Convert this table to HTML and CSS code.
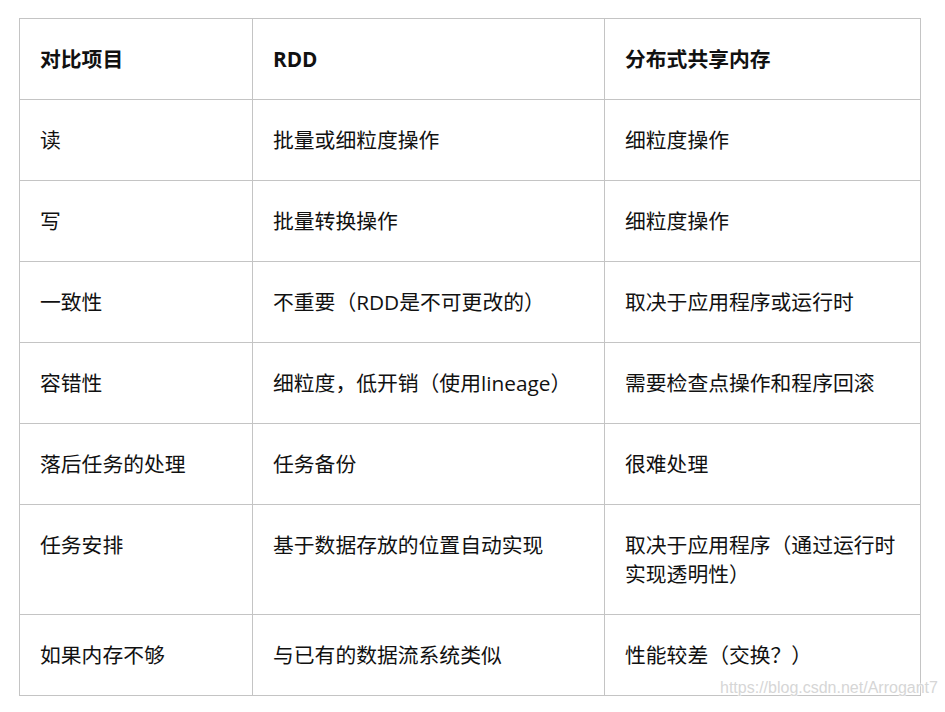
FILE: index.html
```html
<!DOCTYPE html>
<html lang="zh-CN">
<head>
<meta charset="utf-8">
<title>RDD 与分布式共享内存对比</title>
<link rel="stylesheet" href="styles.css">
</head>
<body>
<table class="cmp">
  <colgroup>
    <col class="c1">
    <col class="c2">
    <col class="c3">
  </colgroup>
  <thead>
    <tr><th>对比项目</th><th>RDD</th><th>分布式共享内存</th></tr>
  </thead>
  <tbody>
    <tr><td>读</td><td>批量或细粒度操作</td><td>细粒度操作</td></tr>
    <tr><td>写</td><td>批量转换操作</td><td>细粒度操作</td></tr>
    <tr><td>一致性</td><td>不重要（RDD是不可更改的）</td><td>取决于应用程序或运行时</td></tr>
    <tr><td>容错性</td><td>细粒度，低开销（使用lineage）</td><td>需要检查点操作和程序回滚</td></tr>
    <tr><td>落后任务的处理</td><td>任务备份</td><td>很难处理</td></tr>
    <tr><td>任务安排</td><td>基于数据存放的位置自动实现</td><td>取决于应用程序（通过运行时实现透明性）</td></tr>
    <tr><td>如果内存不够</td><td>与已有的数据流系统类似</td><td>性能较差（交换？）</td></tr>
  </tbody>
</table>
<div class="watermark">https://blog.csdn.net/Arrogant7</div>
</body>
</html>
```
FILE: styles.css
```css
html, body {
  margin: 0;
  padding: 0;
  background: #ffffff;
}
body {
  padding: 18px 0 0 19px;
  font-family: "Open Sans", "Noto Sans CJK SC", sans-serif;
  color: #111111;
}
.cmp {
  border-collapse: collapse;
  table-layout: fixed;
  width: 901px;
  font-size: 20.8px;
  line-height: 29px;
}
.c1 { width: 233px; }
.c2 { width: 352px; }
.c3 { width: 316px; }
.cmp th,
.cmp td {
  border: 1px solid #c4c4c4;
  padding: 25.5px 20px;
  text-align: left;
  vertical-align: top;
  font-weight: normal;
}
.cmp th {
  font-weight: bold;
}
.watermark {
  position: absolute;
  left: 720px;
  top: 679px;
  font-family: "Liberation Sans", Arial, sans-serif;
  font-size: 16px;
  color: #d6d6d6;
  text-shadow: 0 0 2px #fff, 0 0 2px #fff, 0 0 1px #fff;
  white-space: nowrap;
}
```
